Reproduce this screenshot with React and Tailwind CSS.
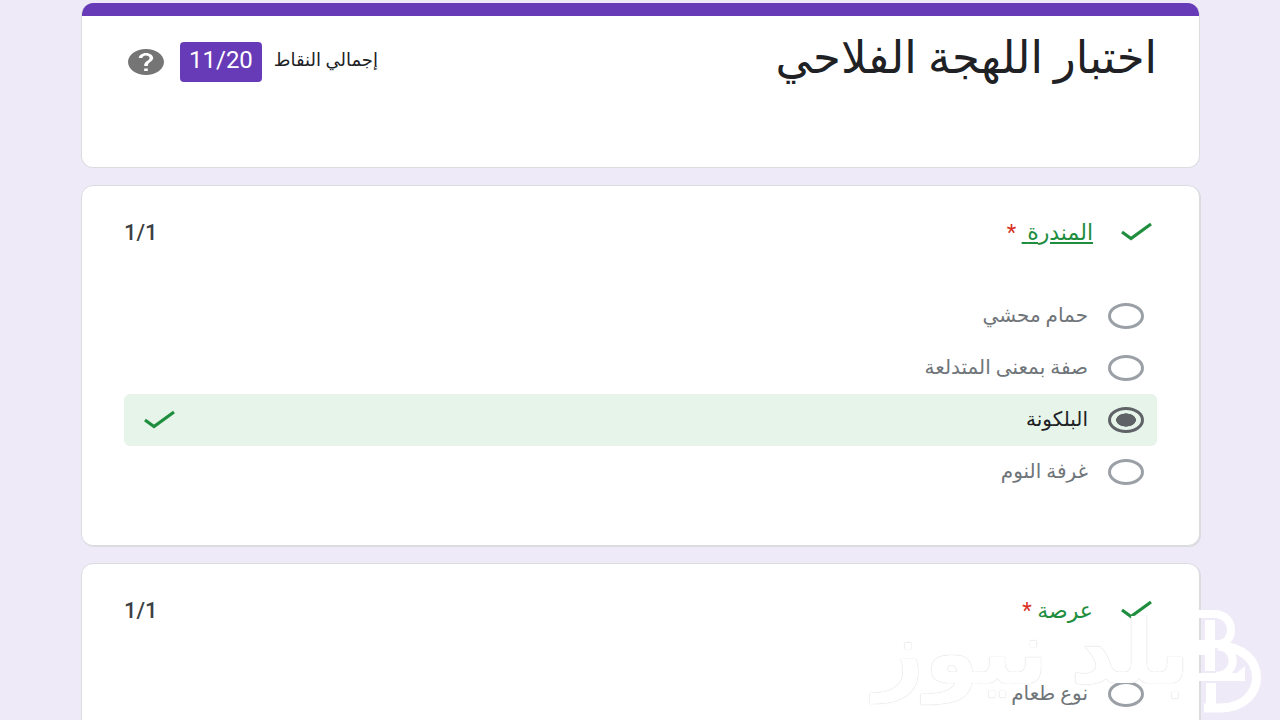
import clsx from "clsx";

const questions = [
  {
    title: "المندرة",
    underlined: true,
    score: "1/1",
    options: [
      { label: "حمام محشي" },
      { label: "صفة بمعنى المتدلعة" },
      { label: "البلكونة", selected: true },
      { label: "غرفة النوم" },
    ],
  },
  {
    title: "عرصة",
    score: "1/1",
    options: [{ label: "نوع طعام" }],
  },
];

const CheckMark = () => (
  <svg
    className="w-8 h-5 shrink-0"
    viewBox="0 0 32 20"
    fill="none"
    stroke="#1e8e3e"
    strokeWidth="3.2"
  >
    <path d="M1 10 L10 16.500 L30 2" />
  </svg>
);

const Option = ({ option, name }) => (
  <label
    className={clsx(
      "flex items-center h-13 ps-[13px] pe-5 rounded-md text-xl",
      option.selected ? "bg-[#e6f4ea] text-[#202124]" : "text-[#70757a]"
    )}
  >
    <input
      type="radio"
      name={name}
      defaultChecked={option.selected}
      className="appearance-none shrink-0 w-9 h-[26px] rounded-[50%] border-3 border-[#9aa0a6] checked:border-[#5f6368] checked:bg-[radial-gradient(closest-side,#5f6368_64%,transparent_68%)]"
    />
    <span className="ms-5 grow leading-7 pb-0.5">{option.label}</span>
    {option.selected && <CheckMark />}
  </label>
);

const Question = ({ question, name }) => (
  <section className="bg-white border border-[#dadce0] rounded-xl px-[42px] pt-[26px] pb-[47px] shadow-[1px_1px_0_#dadce0]">
    <div className="flex items-center h-10 ps-1">
      <CheckMark />
      <h2 className="ms-7 grow text-[22px] text-[#1e8e3e]">
        <span className={clsx(question.underlined && "underline")}>
          {question.title}
          {question.underlined && "\u00a0"}
        </span>{" "}
        <span className="text-[#d93025]">*</span>
      </h2>
      <span className="text-[22px] font-medium text-[#3c4043]">
        {question.score}
      </span>
    </div>
    <div className="mt-[38px]">
      {question.options.map((option) => (
        <Option key={option.label} option={option} name={name} />
      ))}
    </div>
  </section>
);

const Watermark = () => (
  <div
    dir="ltr"
    className="absolute right-2.5 bottom-1 flex items-end pointer-events-none"
  >
    <span
      dir="rtl"
      className="mb-2 text-[88px] leading-[110px] font-bold text-white whitespace-nowrap [text-shadow:0_0_1px_#b8b8b8]"
    >
      بلد نيوز
    </span>
    <svg
      className="w-20 h-[110px]"
      viewBox="0 0 80 110"
      fill="none"
      stroke="#fff"
      strokeWidth="8"
    >
      <path d="M0 8 H24 C46 8 46 38 28 38 H0" />
      <path d="M0 45 H24 M28 40 C48 42 48 69 26 70" />
      <path d="M0 71 H55" />
      <path fill="#fff" stroke="none" d="M55 60 V70 H43 Z" />
      <path strokeWidth="9" d="M28 40 C79 40 79 102 30 102 H14" />
      <path strokeWidth="10" d="M20 14 V65 M21 77 V104" />
    </svg>
  </div>
);

const App = () => (
  <div
    dir="rtl"
    className="relative h-screen overflow-hidden bg-[#eeeaf8] pl-[81px] pr-20 pt-[3px] font-['Roboto','DejaVu_Sans',sans-serif]"
  >
    <main className="flex flex-col gap-[17px]">
      <header className="bg-white border border-[#dadce0] border-t-0 rounded-xl overflow-hidden h-[165px]">
        <div className="h-[13px] bg-[#673ab7]" />
        <div className="flex items-start justify-between ps-[42px] pe-[46px] pt-3">
          <h1 className="text-[45px] leading-15 text-[#202124]">
            اختبار اللهجة الفلاحي
          </h1>
          <div className="flex items-center pt-3.5">
            <span className="text-lg leading-8 pb-1 text-[#202124]">
              إجمالي النقاط
            </span>
            <span className="ms-3 h-10 px-[9px] rounded-sm bg-[#673ab7] text-white text-2xl leading-9">
              11/20
            </span>
            <button type="button" aria-label="مساعدة" className="ms-4">
              <svg
                className="w-9 h-[26px]"
                viewBox="2 2 20 20"
                preserveAspectRatio="none"
              >
                <path
                  fill="#757575"
                  d="M12 2C6.480 2 2 6.480 2 12s4.480 10 10 10 10-4.480 10-10S17.520 2 12 2zm1 17h-2v-2h2v2zm2.070-7.750l-.9.920C13.450 12.900 13 13.500 13 15h-2v-.5c0-1.100.450-2.100 1.170-2.830l1.240-1.260c.370-.360.590-.860.590-1.410 0-1.100-.9-2-2-2s-2 .9-2 2H8c0-2.210 1.790-4 4-4s4 1.790 4 4c0 .880-.360 1.680-.930 2.250z"
                />
              </svg>
            </button>
          </div>
        </div>
      </header>
      {questions.map((question, i) => (
        <Question key={question.title} question={question} name={`q${i}`} />
      ))}
    </main>
    <Watermark />
  </div>
);

export default App;
